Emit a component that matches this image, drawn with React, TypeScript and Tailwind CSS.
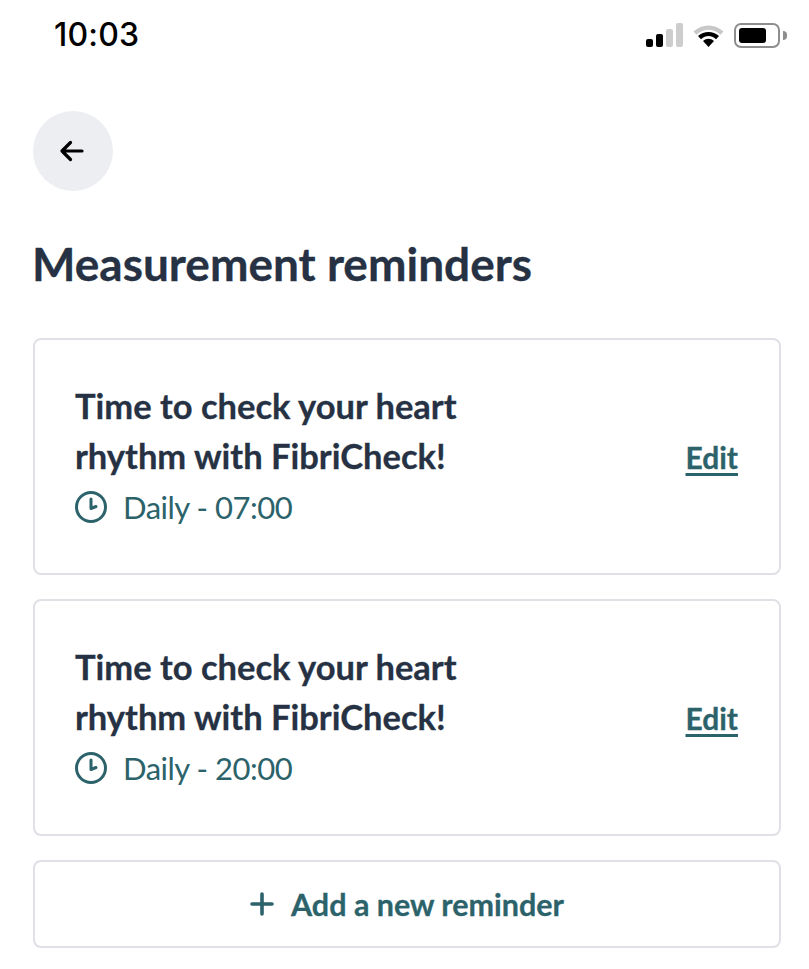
import React from "react";

function Clock() {
  return (
    <svg width="34" height="34" viewBox="0 0 34 34" fill="none" stroke="#2c636b" strokeWidth="3" strokeLinecap="round" strokeLinejoin="round" className="shrink-0">
      <circle cx="17" cy="17" r="14.5" />
      <path d="M17 9v9.500l5-2" />
    </svg>
  );
}

function StatusIcons() {
  return (
    <div className="flex items-center gap-[9px]">
      <div className="flex items-end gap-[3px]">
        <div className="w-[7px] h-[8px] rounded-[2px] bg-black" />
        <div className="w-[7px] h-[13px] rounded-[2px] bg-black" />
        <div className="w-[7px] h-[18px] rounded-[2px] bg-[#cdcdcd]" />
        <div className="w-[7px] h-[24px] rounded-[2px] bg-[#cdcdcd]" />
      </div>
      <svg width="33" height="24" viewBox="0 0 32 24">
        <path d="M1 8.500C9.500 .5 22.500 .5 31 8.500l-3 3.200C21 5 11 5 4 11.700z" fill="#c8c8c8" />
        <path d="M5.500 13C11.500 7.500 20.500 7.500 26.500 13l-3 3.200C18.500 12 13.500 12 8.500 16.200z" fill="#000" />
        <path d="M10.500 18C14 15 18 15 21.500 18L16 24z" fill="#000" />
      </svg>
      <div className="flex items-center gap-[3px]">
        <div className="w-[46px] h-[25px] rounded-[7px] border-2 border-[#8e8e8e] p-[3px]">
          <div className="w-[27px] h-full rounded-[3px] bg-black" />
        </div>
        <div className="w-[4px] h-[9px] rounded-r-full bg-[#8e8e8e]" />
      </div>
    </div>
  );
}

function ReminderCard({ time }: { time: string }) {
  return (
    <div className="h-[237px] rounded-[8px] border-2 border-[#e0e0e6] bg-white pl-[40px] pr-[41px] flex justify-between">
      <div className="pt-[41px]">
        <div className="w-[420px] text-[34.500px] leading-[50px] font-bold text-[#263244] [-webkit-text-stroke:0.3px_#263244]">
          Time to check your heart rhythm with FibriCheck!
        </div>
        <div className="mt-[1px] flex items-center gap-[15px] h-[50px] text-[#2c636b] text-[31px] tracking-[-0.5px] -ml-[1px]">
          <Clock />
          <span>Daily - {time}</span>
        </div>
      </div>
      <a className="self-center mt-[1px] text-[30px] font-bold text-[#2c636b] underline underline-offset-[4px] decoration-[3px] [-webkit-text-stroke:0.3px_#2c636b]">Edit</a>
    </div>
  );
}

export default function App() {
  return (
    <div className="w-[809px] h-[969px] overflow-hidden bg-white font-['Lato','Noto_Sans',sans-serif]">
      <div className="h-[70px] pl-[54px] pr-[22px] flex items-center justify-between">
        <span className="text-[32px] font-medium text-black font-['Inter',sans-serif] tracking-[0.2px]">10:03</span>
        <StatusIcons />
      </div>
      <div className="pl-[33px] pr-[28px] pt-[41px]">
        <button className="w-[80px] h-[80px] rounded-full bg-[#eceef2] flex items-center justify-center">
          <svg width="30" height="30" viewBox="0 0 30 30" fill="none" stroke="#000" strokeWidth="3.200" strokeLinecap="round" strokeLinejoin="round" className="-ml-[2px]">
            <path d="M25 15H5M13.500 6.500 5 15l8.500 8.500" />
          </svg>
        </button>
        <h1 className="mt-[43px] -ml-[1px] h-[60px] leading-[60px] text-[46px] font-bold text-[#263244] [-webkit-text-stroke:0.3px_#263244]">Measurement reminders</h1>
        <div className="mt-[44px] flex flex-col gap-[24px]">
          <ReminderCard time="07:00" />
          <ReminderCard time="20:00" />
          <button className="h-[88px] rounded-[8px] border-2 border-[#e0e0e6] flex items-center justify-center gap-[17px] text-[30.500px] font-bold text-[#2c636b] [-webkit-text-stroke:0.3px_#2c636b]">
            <svg width="24" height="24" viewBox="0 0 24 24" fill="none" stroke="#2c636b" strokeWidth="3.600" strokeLinecap="round">
              <path d="M12 2v20M2 12h20" />
            </svg>
            <span className="mt-[2px]">Add a new reminder</span>
          </button>
        </div>
      </div>
    </div>
  );
}
